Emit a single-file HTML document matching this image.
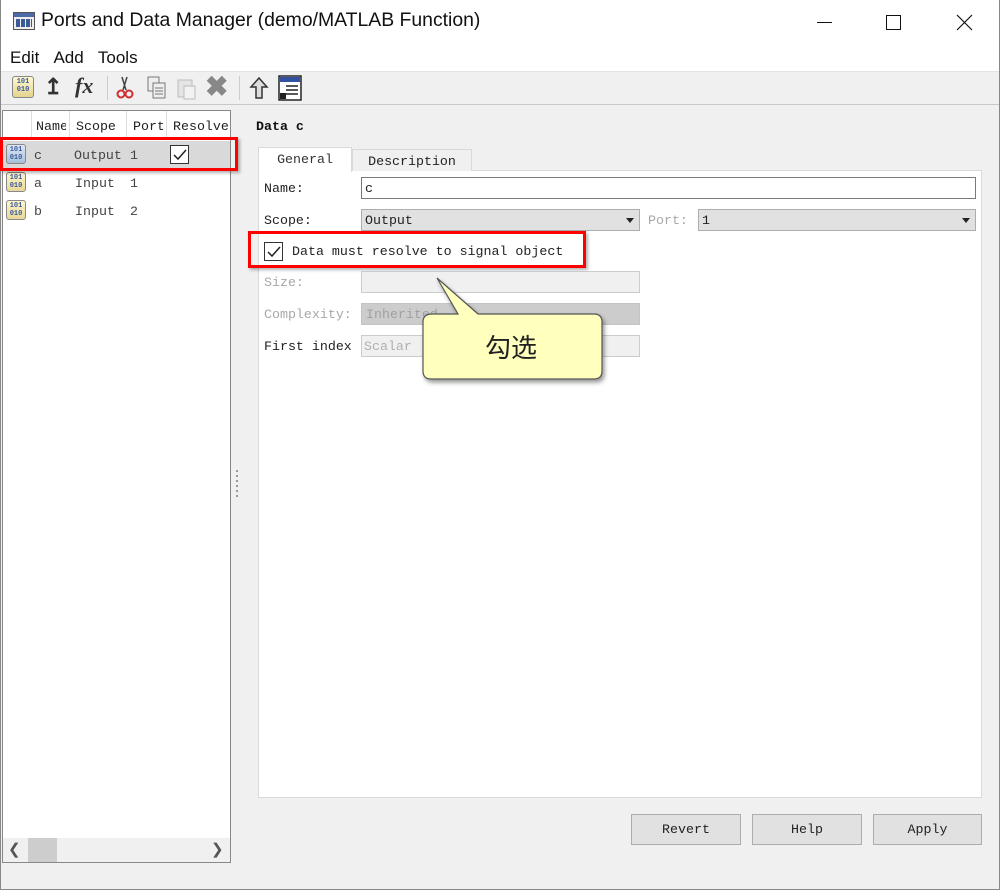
<!DOCTYPE html>
<html><head><meta charset="utf-8"><style>
*{margin:0;padding:0;box-sizing:border-box}
body{width:1000px;height:890px;background:#fff;position:relative;overflow:hidden;font-family:"Liberation Mono","Noto Serif CJK SC",monospace;font-size:13.3px;color:#222}
.a{position:absolute}
.ui{font-family:"Liberation Sans",sans-serif}
.lbl{color:#222}
.dis{color:#a8a8a8}
.inp{background:#fff;border:1px solid #7a7a7a}
.sel{background:#e1e1e1;border:1px solid #adadad}
.btn{background:#e1e1e1;border:1px solid #adadad;text-align:center;line-height:29px}
.ico{width:20px;height:20px;border:1px solid #888;border-radius:3px;background:linear-gradient(#fff6cc,#e8d898);font-size:7px;line-height:8px;text-align:center;color:#3a5a9a;padding-top:1px;font-family:"Liberation Mono",monospace;font-weight:bold}
.arr{border-left:4px solid transparent;border-right:4px solid transparent;border-top:5px solid #222;width:0;height:0}
</style></head><body>
<div class="a" style="left:0;top:0;width:1000px;height:890px;border:1px solid #888;border-top:none"></div>
<div class="a" style="left:13px;top:12px;width:22px;height:18px;border:1px solid #555;background:#eee">
 <div style="height:4px;background:#4a6aa8"></div>
 <div style="margin:2px 2px;height:8px;background:repeating-linear-gradient(90deg,#3a5a9a 0 4px,transparent 4px 5px)"></div>
</div>
<div class="a ui" style="left:41px;top:9px;font-size:19.4px;color:#111">Ports and Data Manager (demo/MATLAB Function)</div>
<div class="a" style="left:817px;top:22px;width:15px;height:1px;background:#111"></div>
<div class="a" style="left:886px;top:15px;width:15px;height:15px;border:1px solid #111"></div>
<svg class="a" style="left:956px;top:14px" width="17" height="17"><path d="M1 1L16 16M16 1L1 16" stroke="#111" stroke-width="1.2"/></svg>
<div class="a ui" style="left:10px;top:48px;font-size:17px;color:#111">Edit&nbsp;&nbsp;&nbsp;Add&nbsp;&nbsp;&nbsp;Tools</div>
<div class="a" style="left:1px;top:71px;width:998px;height:818px;background:#f0f0f0;border-top:1px solid #e4e4e4"></div>
<div class="a" style="left:1px;top:104px;width:998px;height:1px;background:#c8c8c8"></div>
<div class="a ico" style="left:12px;top:76px;width:22px;height:22px;background:linear-gradient(#fff8d0,#e4d490)">101<br>010</div>
<div class="a" style="left:44px;top:74px;font-size:22px;font-weight:bold;color:#333;font-family:'Liberation Sans'">&#8613;</div>
<div class="a" style="left:75px;top:73px;font-size:22px;font-style:italic;font-weight:bold;font-family:'Liberation Serif',serif;color:#333">fx</div>
<div class="a" style="left:107px;top:76px;width:1px;height:24px;background:#ccc"></div>
<svg class="a" style="left:115px;top:76px" width="20" height="24"><path d="M12 1L8 14M7 1L11 14" stroke="#444" stroke-width="1.5"/><circle cx="6" cy="18" r="3.5" fill="none" stroke="#d03030" stroke-width="2"/><circle cx="14" cy="18" r="3.5" fill="none" stroke="#d03030" stroke-width="2"/></svg>
<svg class="a" style="left:146px;top:76px" width="22" height="24"><rect x="2" y="1" width="11" height="14" fill="#eee" stroke="#777"/><rect x="7" y="7" width="12" height="15" fill="#eee" stroke="#777"/><path d="M9 12h8M9 15h8M9 18h8" stroke="#777"/></svg>
<svg class="a" style="left:176px;top:76px" width="22" height="24"><rect x="2" y="4" width="14" height="17" fill="#e4e4e4" stroke="#bbb"/><rect x="8" y="10" width="11" height="13" fill="#f2f2f2" stroke="#bbb"/></svg>
<div class="a" style="left:205px;top:70px;font-size:28px;font-weight:bold;color:#888;font-family:'Liberation Sans'">&#10006;</div>
<div class="a" style="left:239px;top:76px;width:1px;height:24px;background:#ccc"></div>
<svg class="a" style="left:248px;top:76px" width="22" height="24"><path d="M11 2L3 11h5v11h6V11h5z" fill="#ddd" stroke="#333" stroke-width="1.5"/></svg>
<svg class="a" style="left:278px;top:75px" width="24" height="26"><rect x="1" y="1" width="22" height="24" fill="#fff" stroke="#222" stroke-width="1.5"/><rect x="2" y="2" width="20" height="5" fill="#3050a0"/><path d="M8 11h12M8 15h12M8 19h12" stroke="#222" stroke-width="1.5"/><rect x="2" y="18" width="6" height="6" fill="#222"/></svg>
<div class="a" style="left:2px;top:110px;width:229px;height:753px;background:#fff;border:1px solid #888"></div>
<div class="a" style="left:3px;top:111px;width:227px;height:29px;border-bottom:1px solid #ddd"></div>
<div class="a" style="left:31px;top:111px;width:1px;height:29px;background:#ddd"></div>
<div class="a" style="left:69px;top:111px;width:1px;height:29px;background:#ddd"></div>
<div class="a" style="left:126px;top:111px;width:1px;height:29px;background:#ddd"></div>
<div class="a" style="left:166px;top:111px;width:1px;height:29px;background:#ddd"></div>
<div class="a" style="left:36px;top:119px;width:30px;overflow:hidden;white-space:nowrap">Name</div>
<div class="a" style="left:76px;top:119px">Scope</div>
<div class="a" style="left:133px;top:119px;width:30px;overflow:hidden;white-space:nowrap">Port</div>
<div class="a" style="left:173px;top:119px;width:57px;overflow:hidden;white-space:nowrap">Resolve</div>
<div class="a" style="left:3px;top:141px;width:227px;height:28px;background:#d9d9d9"></div>
<div class="a ico" style="left:6px;top:144px;background:linear-gradient(#dde8f4,#a8c0dc)">101<br>010</div>
<div class="a ico" style="left:6px;top:172px">101<br>010</div>
<div class="a ico" style="left:6px;top:200px">101<br>010</div>
<div class="a" style="left:34px;top:148px;color:#444">c</div>
<div class="a" style="left:74px;top:148px;color:#444">Output</div>
<div class="a" style="left:130px;top:148px;color:#444">1</div>
<div class="a" style="left:170px;top:145px;width:19px;height:19px;background:#fff;border:1px solid #333"></div>
<svg class="a" style="left:172px;top:147px" width="16" height="16"><path d="M2 8l4 4 8-9" stroke="#222" stroke-width="1.5" fill="none"/></svg>
<div class="a" style="left:34px;top:176px;color:#444">a</div>
<div class="a" style="left:75px;top:176px;color:#444">Input</div>
<div class="a" style="left:130px;top:176px;color:#444">1</div>
<div class="a" style="left:34px;top:204px;color:#444">b</div>
<div class="a" style="left:75px;top:204px;color:#444">Input</div>
<div class="a" style="left:130px;top:204px;color:#444">2</div>
<div class="a" style="left:0;top:137px;width:238px;height:34px;border:3px solid #f00;box-shadow:2px 2px 3px rgba(0,0,0,.3)"></div>
<div class="a" style="left:3px;top:838px;width:227px;height:24px;background:#f0f0f0"></div>
<div class="a" style="left:28px;top:838px;width:29px;height:24px;background:#cdcdcd"></div>
<div class="a ui" style="left:8px;top:840px;font-size:15px;color:#555">&#10094;</div>
<div class="a ui" style="left:211px;top:840px;font-size:15px;color:#555">&#10095;</div>
<div class="a" style="left:236px;top:470px;width:2px;height:28px;background:repeating-linear-gradient(#999 0 2px,transparent 2px 5px)"></div>
<div class="a" style="left:256px;top:119px;font-weight:bold;color:#111">Data c</div>
<div class="a" style="left:258px;top:170px;width:724px;height:628px;background:#fff;border:1px solid #d9d9d9"></div>
<div class="a" style="left:352px;top:149px;width:120px;height:22px;background:#f0f0f0;border:1px solid #d9d9d9;border-bottom:none;text-align:center;line-height:23px">Description</div>
<div class="a" style="left:258px;top:147px;width:94px;height:25px;background:#fff;border:1px solid #d9d9d9;border-bottom:none;text-align:center;line-height:24px;color:#333">General</div>
<div class="a lbl" style="left:264px;top:181px">Name:</div>
<div class="a inp" style="left:361px;top:177px;width:615px;height:22px;padding-left:3px;line-height:21px">c</div>
<div class="a lbl" style="left:264px;top:213px">Scope:</div>
<div class="a sel" style="left:361px;top:209px;width:279px;height:22px;padding-left:3px;line-height:22px">Output</div>
<div class="a arr" style="left:626px;top:218px"></div>
<div class="a dis" style="left:648px;top:213px">Port:</div>
<div class="a sel" style="left:698px;top:209px;width:278px;height:22px;padding-left:3px;line-height:22px">1</div>
<div class="a arr" style="left:962px;top:218px"></div>
<div class="a" style="left:264px;top:242px;width:19px;height:19px;border:1px solid #333;background:#fff"></div>
<svg class="a" style="left:266px;top:244px" width="16" height="16"><path d="M2 8l4 4 8-9" stroke="#222" stroke-width="1.5" fill="none"/></svg>
<div class="a" style="left:292px;top:244px">Data must resolve to signal object</div>
<div class="a" style="left:248px;top:231px;width:338px;height:37px;border:3px solid #f00;box-shadow:2px 2px 3px rgba(0,0,0,.3)"></div>
<div class="a dis" style="left:264px;top:275px">Size:</div>
<div class="a" style="left:361px;top:271px;width:279px;height:22px;background:#f0f0f0;border:1px solid #ccc"></div>
<div class="a dis" style="left:264px;top:307px">Complexity:</div>
<div class="a" style="left:361px;top:303px;width:279px;height:22px;background:#cccccc;border:1px solid #c4c4c4;padding-left:4px;line-height:22px;color:#a0a0a0">Inherited</div>
<div class="a" style="left:264px;top:339px;color:#222">First index</div>
<div class="a" style="left:361px;top:335px;width:279px;height:22px;background:#f0f0f0;border:1px solid #ccc;padding-left:2px;line-height:22px;color:#b0b0b0">Scalar</div>
<svg class="a" style="left:418px;top:274px" width="200" height="118">
 <defs><filter id="s"><feDropShadow dx="2" dy="3" stdDeviation="2" flood-opacity=".4"/></filter></defs>
 <path d="M14 40H40L19 4L60 40H176Q184 40 184 48V97Q184 105 176 105H13Q5 105 5 97V48Q5 40 14 40Z" fill="#ffffbe" stroke="#555" stroke-width="1.2" filter="url(#s)"/>
</svg>
<div class="a" style="left:485px;top:331px;font-size:26px;font-family:'Noto Sans CJK SC',sans-serif;color:#222;line-height:32px">勾选</div>
<div class="a btn" style="left:631px;top:814px;width:110px;height:31px">Revert</div>
<div class="a btn" style="left:752px;top:814px;width:110px;height:31px">Help</div>
<div class="a btn" style="left:873px;top:814px;width:109px;height:31px">Apply</div>
</body></html>
